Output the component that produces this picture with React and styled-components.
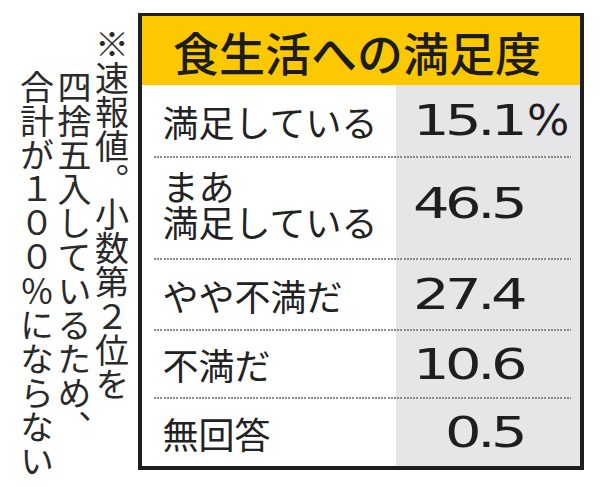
import React from "react";
import styled, { createGlobalStyle } from "styled-components";

const GlobalStyle = createGlobalStyle`
  html, body {
    margin: 0;
    padding: 0;
    background: #fff;
  }
  body {
    font-family: "Noto Sans CJK JP", "Noto Sans", sans-serif;
    color: #222;
  }
`;

const rows = [
  { label: ["満足している"], value: "15.1", unit: "%", height: 71 },
  { label: ["まあ", "満足している"], value: "46.5", height: 100, lift: 10 },
  { label: ["やや不満だ"], value: "27.4", height: 69 },
  { label: ["不満だ"], value: "10.6", height: 66 },
  { label: ["無回答"], value: "0.5", height: 67 },
];

const App = () => {
  return (
    <Page>
      <GlobalStyle />
      <Note>
        ※速報値。小数第２位を
        <br />
        四捨五入しているため、
        <br />
        合計が１００％にならない
      </Note>
      <Board>
        <Title>食生活への満足度</Title>
        <Body>
          {rows.map((row, i) => (
            <React.Fragment key={row.value}>
              {i > 0 && <Dots />}
              <Row $height={row.height} $lift={row.lift}>
                <Label>
                  {row.label.map(line => (
                    <span key={line}>{line}</span>
                  ))}
                </Label>
                <Value>
                  <Num>{row.value}</Num>
                  <Unit>{row.unit}</Unit>
                </Value>
              </Row>
            </React.Fragment>
          ))}
        </Body>
      </Board>
    </Page>
  );
};

const Page = styled.div`
  display: flex;
  align-items: flex-start;
  width: 600px;
  height: 487px;
  padding: 13px 0 0 18px;
  box-sizing: border-box;
  gap: 7px;
  overflow: hidden;
`;

const Note = styled.p`
  margin: 14px 0 0;
  writing-mode: vertical-rl;
  font-size: 34px;
  line-height: 37.5px;
  height: 455px;
  box-sizing: border-box;
  padding-top: 43px;
  text-indent: -43px;
  color: #2a2a2a;
  white-space: nowrap;
`;

const Board = styled.div`
  width: 446px;
  height: 457px;
  box-sizing: border-box;
  border: 4px solid #1e1e1e;
  border-top-width: 3px;
  display: flex;
  flex-direction: column;
`;

const Title = styled.div`
  height: 69px;
  flex: none;
  background: #fcc800;
  display: flex;
  align-items: center;
  justify-content: center;
  padding-right: 7px;
  font-size: 46px;
  font-weight: 500;
  color: #1c1c1c;
`;

const Body = styled.div`
  flex: 1;
  display: flex;
  flex-direction: column;
  background: linear-gradient(to right, #fff 254px, #e6e6e8 254px);
`;

const Dots = styled.div`
  height: 2px;
  flex: none;
  margin: 0 9px 0 12px;
  background: repeating-linear-gradient(
    to right,
    #8a8a8a 0 2px,
    transparent 2px 3.2px
  );
`;

const Row = styled.div`
  height: ${p => p.$height}px;
  flex: none;
  display: grid;
  grid-template-columns: 254px 1fr;
  align-items: center;
  padding-bottom: ${p => p.$lift || 0}px;
  box-sizing: border-box;
`;

const Label = styled.div`
  display: flex;
  flex-direction: column;
  padding-left: 21px;
  font-size: 36px;
  line-height: 36px;
  color: #222;
`;

const Value = styled.div`
  display: flex;
  align-items: center;
`;

const Num = styled.span`
  width: 127px;
  text-align: right;
  font-family: "DejaVu Sans", sans-serif;
  font-size: 42px;
  letter-spacing: -3.3px;
  transform: scaleX(1.37);
  transform-origin: right center;
  color: #1e1e1e;
`;

const Unit = styled.span`
  margin-left: 4px;
  font-family: "DejaVu Sans", sans-serif;
  font-size: 42px;
  transform: scaleX(1.06);
  transform-origin: left center;
  color: #1e1e1e;
`;

export default App;
